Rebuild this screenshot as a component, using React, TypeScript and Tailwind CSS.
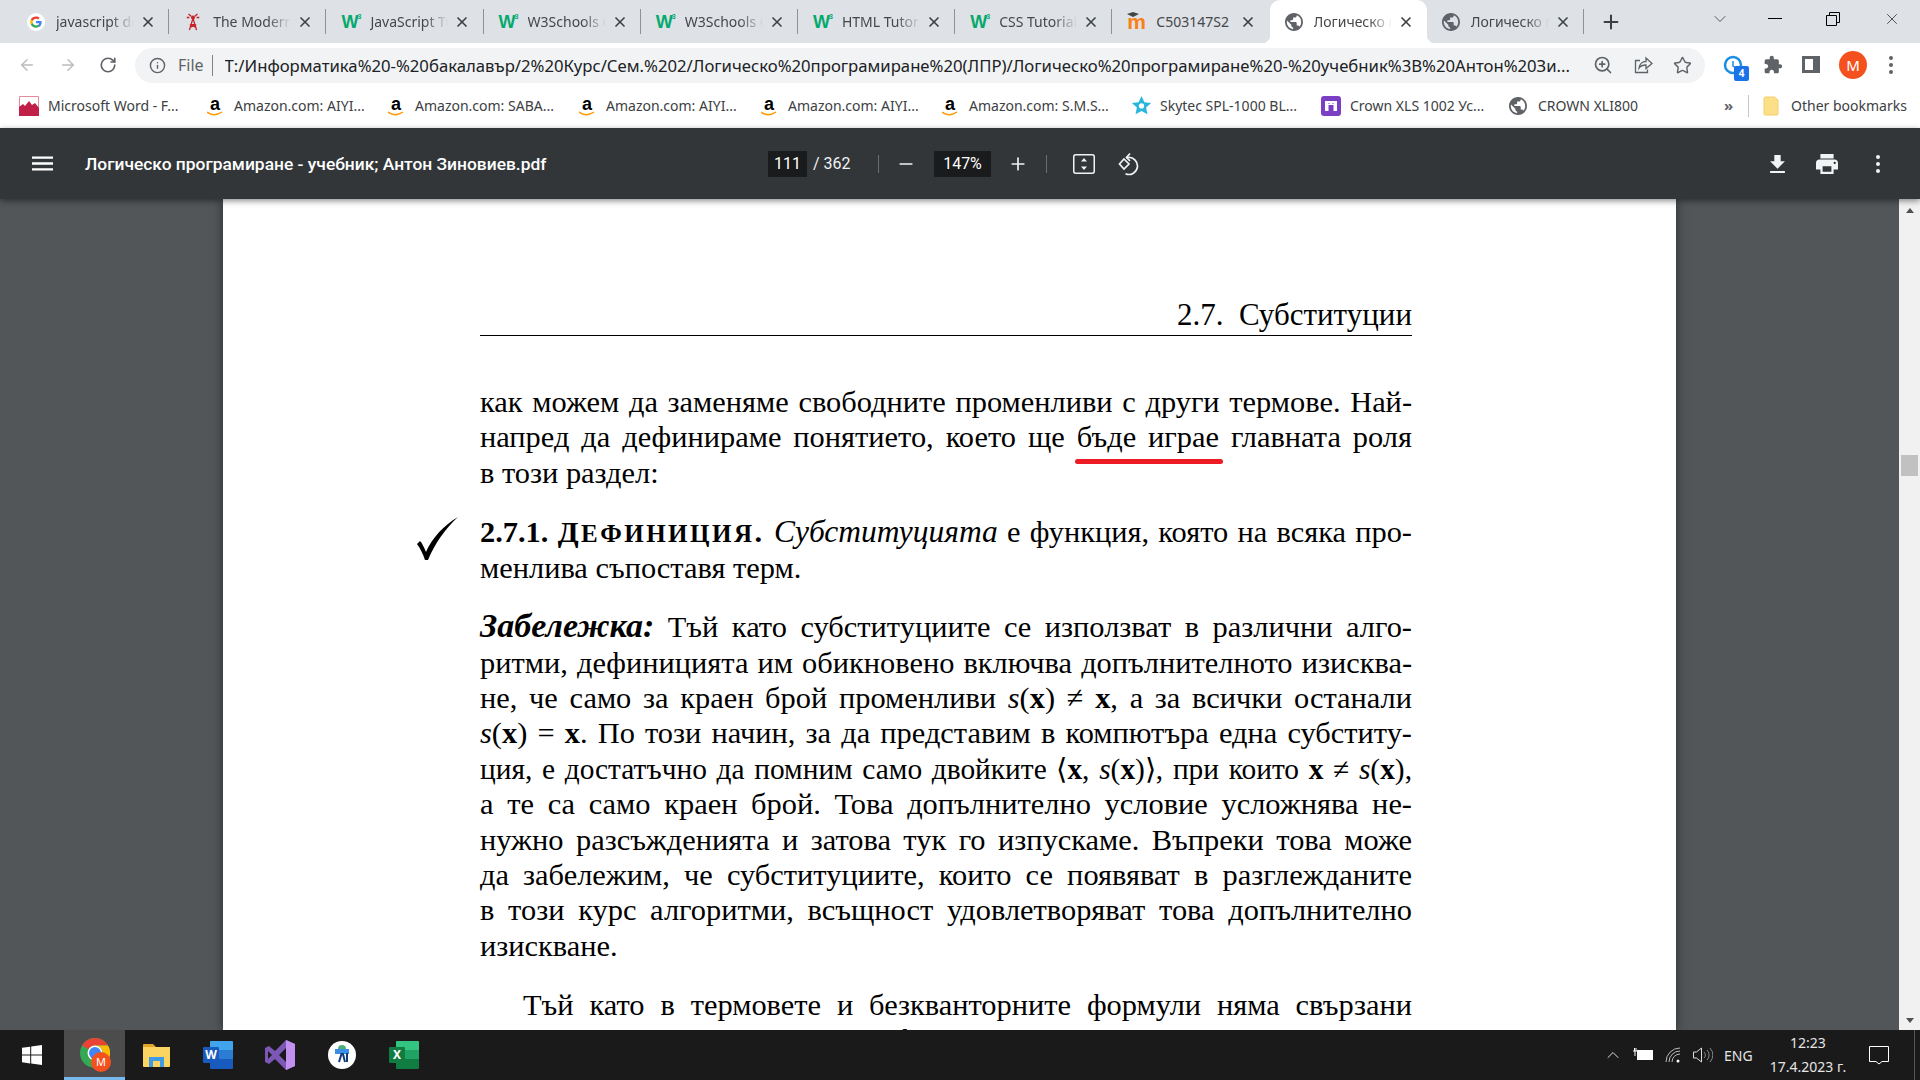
import type { ReactNode } from "react"
import { ArrowLeft, ArrowRight, ChevronDown, ChevronUp, Info, Minus, Plus, RotateCw, Star, X, ZoomIn } from "lucide-react"

const GLOBE =
	"M12 2C6.48 2 2 6.48 2 12s4.48 10 10 10 10-4.48 10-10S17.52 2 12 2zm-1 17.93c-3.95-.49-7-3.85-7-7.93 0-.62.08-1.21.21-1.79L9 15v1c0 1.1.9 2 2 2v1.93zm6.9-2.54c-.26-.81-1-1.39-1.9-1.39h-1v-3c0-.55-.45-1-1-1H8v-2h2c.55 0 1-.45 1-1V7h2c1.1 0 2-.9 2-2v-.41c2.93 1.19 5 4.06 5 7.41 0 2.08-.8 3.97-2.1 5.39z"

function Globe({ className }: { className: string }) {
	return (
		<svg viewBox="2 2 20 20" className={className}>
			<path d={GLOBE} fill="#5f6368" />
		</svg>
	)
}

function GoogleIcon() {
	return (
		<svg viewBox="0 0 48 48" className="w-[18px] h-[18px]">
			<circle cx="24" cy="24" r="24" fill="#fff" />
			<path fill="#EA4335" d="M24 9c4 0 7.300 1.400 9.800 3.800l-4.400 4.400C28 15.800 26.100 15 24 15c-4 0-7.500 2.700-8.700 6.400l-5.200-4C12.600 12.400 17.900 9 24 9z" />
			<path fill="#4285F4" d="M39 24.500c0-1.100-.1-2.100-.3-3H24v6h8.400c-.4 1.900-1.500 3.700-3.200 4.900l5.100 4C37.300 33.600 39 29.400 39 24.500z" />
			<path fill="#FBBC05" d="M15.300 26.600c-.6-1.700-.6-3.500 0-5.200l-5.200-4c-2.200 4.400-2.200 8.800 0 13.200z" />
			<path fill="#34A853" d="M24 39c4 0 7.500-1.300 10.300-3.600l-5.100-4c-1.400 1-3.200 1.600-5.200 1.600-4 0-7.500-2.700-8.700-6.400l-5.200 4C12.600 35.600 17.900 39 24 39z" />
		</svg>
	)
}

function W3Icon() {
	return (
		<span className="w-[20px] h-[18px] flex items-start font-['Liberation_Sans',sans-serif] font-bold text-[#04aa6d] text-[18px] leading-[18px] tracking-[-1px]">
			W<span className="text-[7px] leading-[8px] text-[#04aa6d]">3</span>
		</span>
	)
}

function TowerIcon() {
	return (
		<svg viewBox="0 0 20 20" className="w-[18px] h-[18px]" fill="none" stroke="#c8232c" strokeWidth="1.500">
			<path d="M10 6 6 19M10 6l4 13M7.500 13h5M6.500 16l7-3M13.500 16l-7-3" />
			<circle cx="10" cy="5" r="1.500" fill="#c8232c" />
			<path d="M5 1l3 2.500M15 1l-3 2.500M3 5h3M17 5h-3" />
		</svg>
	)
}

function MoodleIcon() {
	return (
		<span className="relative w-[20px] h-[18px] flex items-end font-['Liberation_Sans',sans-serif] font-bold text-[#f98012] text-[21px] leading-[18px]">
			m
			<svg viewBox="0 0 12 6" className="absolute -top-[1px] left-0 w-[12px] h-[6px]">
				<path d="M0 2 6 0l6 2-6 3z" fill="#444" />
			</svg>
		</span>
	)
}

const TABS: { label: string; icon: ReactNode; active?: boolean; noFade?: boolean }[] = [
	{ label: "javascript documentation", icon: <GoogleIcon /> },
	{ label: "The Modern JavaScript Tutorial", icon: <TowerIcon /> },
	{ label: "JavaScript Tutorial", icon: <W3Icon /> },
	{ label: "W3Schools Online Web", icon: <W3Icon /> },
	{ label: "W3Schools Online Web", icon: <W3Icon /> },
	{ label: "HTML Tutorial", icon: <W3Icon /> },
	{ label: "CSS Tutorial", icon: <W3Icon /> },
	{ label: "C503147S2", icon: <MoodleIcon />, noFade: true },
	{ label: "Логическо програмиране", icon: <Globe className="w-[18px] h-[18px]" />, active: true },
	{ label: "Логическо програмиране", icon: <Globe className="w-[18px] h-[18px]" /> },
]

function Tab({ label, icon, active, noFade, hideSep }: { label: string; icon: ReactNode; active?: boolean; noFade?: boolean; hideSep?: boolean }) {
	return (
		<div
			className={
				active
					? "relative w-[157.2px] h-[43px] flex items-center pl-[15px] bg-white rounded-t-[10px] before:absolute before:bottom-0 before:-left-2 before:w-2 before:h-2 before:bg-[radial-gradient(circle_at_0_0,transparent_8px,white_8.500px)] after:absolute after:bottom-0 after:-right-2 after:w-2 after:h-2 after:bg-[radial-gradient(circle_at_100%_0,transparent_8px,white_8.500px)]"
					: "relative w-[157.2px] h-[43px] flex items-center pl-[15px]"
			}
		>
			<div className="w-[29px] shrink-0 flex items-center">{icon}</div>
			<div
				className={
					noFade
						? "w-[78px] overflow-hidden whitespace-nowrap text-[14px] text-[#45474a]"
						: "w-[78px] overflow-hidden whitespace-nowrap text-[14px] text-[#45474a] [mask-image:linear-gradient(to_right,black_70%,transparent_100%)]"
				}
			>
				{label}
			</div>
			<X className="ml-[6px] w-[16px] h-[16px] text-[#3c4043]" strokeWidth={2.5} />
			{!active && !hideSep && <div className="absolute right-0 top-[9px] w-px h-[25px] bg-[#8e9196]" />}
		</div>
	)
}

function TabStrip() {
	return (
		<div className="h-[43px] bg-[#dee1e6] flex pl-[12px] shrink-0">
			{TABS.map((t, i) => (
				<Tab key={i} {...t} hideSep={i === 7} />
			))}
			<Plus className="ml-[16px] mt-[11px] w-[22px] h-[22px] text-[#3c4043]" strokeWidth={2.2} />
			<ChevronDown className="ml-[88px] mt-[9px] w-[20px] h-[20px] text-[#3c4043]" strokeWidth={1} />
			<div className="ml-[38px] mt-[18px] w-[14px] h-px bg-black" />
			<svg viewBox="0 0 14 14" className="ml-[44px] mt-[12px] w-[14px] h-[14px]" fill="none" stroke="#000" strokeWidth="1">
				<path d="M0.500 3.500h10v10h-10zM3.500 3.500v-3h10v10h-3" />
			</svg>
			<X className="ml-[43px] mt-[10px] w-[18px] h-[18px] text-[#222]" strokeWidth={1} />
		</div>
	)
}

function ShareIcon() {
	return (
		<svg viewBox="0 0 20 20" className="w-[20px] h-[20px]" fill="none" stroke="#5f6368" strokeWidth="1.300">
			<path d="M7 5.500H2.500v12h12v-3" />
			<path d="M6 13c.5-4 3.500-6.500 7-6.500V3l6 5.500-6 5V10c-3 0-5.500 1-7 3z" />
		</svg>
	)
}

function Toolbar() {
	return (
		<div className="h-[43px] bg-white flex items-center shrink-0 font-['Noto_Sans',sans-serif]">
			<ArrowLeft className="ml-[18px] w-[18px] h-[18px] text-[#babcbe]" />
			<ArrowRight className="ml-[23px] w-[18px] h-[18px] text-[#babcbe]" />
			<RotateCw className="ml-[22px] w-[18px] h-[18px] text-[#5f6368]" strokeWidth={2.2} />
			<div className="ml-[18px] w-[1570px] h-[35px] mt-[1px] rounded-full bg-[#f1f3f4] flex items-center pl-[14px] text-[#202124]">
				<Info className="w-[17px] h-[17px] text-[#5f6368]" strokeWidth={2} />
				<span className="ml-[12px] text-[16px] text-[#5f6368]">File</span>
				<div className="ml-[8px] w-px h-[21px] bg-[#7f8185]" />
				<div className="ml-[12px] w-[1350px] pt-[1px] text-[16.700px] whitespace-nowrap overflow-hidden">
					T:/Информатика%20-%20бакалавър/2%20Курс/Сем.%202/Логическо%20програмиране%20(ЛПР)/Логическо%20програмиране%20-%20учебник%3B%20Антон%20Зи...
				</div>
				<ZoomIn className="ml-[18px] w-[20px] h-[20px] text-[#5f6368]" />
				<div className="ml-[20px]"><ShareIcon /></div>
				<Star className="ml-[20px] w-[19px] h-[19px] text-[#5f6368]" strokeWidth={1.8} />
			</div>
			<div className="relative ml-[18px] w-[20px] h-[20px]">
				<svg viewBox="0 0 20 20" className="w-[20px] h-[20px]" fill="none" stroke="#1a8fe3" strokeWidth="2.500">
					<circle cx="10" cy="10" r="8" />
					<path d="M10 6v5l3 2" strokeWidth="1.500" />
				</svg>
				<div className="absolute left-[11px] top-[11px] w-[15px] h-[15px] rounded-[2px] bg-[#1a73e8] text-white text-[10px] font-bold leading-[15px] text-center">4</div>
			</div>
			<svg viewBox="0 0 24 24" className="ml-[20px] w-[20px] h-[20px]">
				<path fill="#5f6368" d="M20.500 11H19V7c0-1.100-.9-2-2-2h-4V3.500C13 2.120 11.880 1 10.500 1S8 2.120 8 3.500V5H4c-1.100 0-1.990.9-1.990 2v3.800H3.500c1.490 0 2.700 1.210 2.700 2.700s-1.210 2.700-2.700 2.700H2V20c0 1.100.9 2 2 2h3.800v-1.500c0-1.490 1.210-2.700 2.700-2.700 1.490 0 2.700 1.210 2.700 2.700V22H17c1.100 0 2-.9 2-2v-4h1.500c1.380 0 2.500-1.120 2.500-2.500S21.880 11 20.500 11z" />
			</svg>
			<div className="ml-[19px] w-[18px] h-[17px] border-[3px] border-[#5f6368] border-r-[7px] bg-white" />
			<div className="ml-[19px] w-[28px] h-[28px] rounded-full bg-[#f4511e] text-white text-[15px] leading-[28px] text-center">M</div>
			<div className="ml-[22px] flex flex-col gap-[3px]">
				<div className="w-[4px] h-[4px] rounded-full bg-[#5f6368]" />
				<div className="w-[4px] h-[4px] rounded-full bg-[#5f6368]" />
				<div className="w-[4px] h-[4px] rounded-full bg-[#5f6368]" />
			</div>
		</div>
	)
}

function AmazonIcon() {
	return (
		<span className="relative w-[20px] h-[20px] block font-['Liberation_Sans',sans-serif] font-bold text-black text-[18px] leading-[16px] text-center">
			a
			<svg viewBox="0 0 16 5" className="absolute left-[2px] bottom-0 w-[16px] h-[5px]" fill="none" stroke="#f90" strokeWidth="1.500">
				<path d="M0 1c4 3.500 10 3.500 15 0" />
			</svg>
		</span>
	)
}

const BOOKMARKS: { label: string; width: string; icon: ReactNode }[] = [
	{
		label: "Microsoft Word - F...",
		width: "w-[186px]",
		icon: (
			<svg viewBox="0 0 20 20" className="w-[20px] h-[20px]">
				<path d="M.5.5h19v19H.5z" fill="#fff" stroke="#e48a9b" />
				<path d="M0 20V11l4-3 2 2 4-5 3 4 3-2 4 5v8z" fill="#c01f48" />
			</svg>
		),
	},
	{ label: "Amazon.com: AIYI...", width: "w-[181px]", icon: <AmazonIcon /> },
	{ label: "Amazon.com: SABA...", width: "w-[191px]", icon: <AmazonIcon /> },
	{ label: "Amazon.com: AIYI...", width: "w-[182px]", icon: <AmazonIcon /> },
	{ label: "Amazon.com: AIYI...", width: "w-[181px]", icon: <AmazonIcon /> },
	{ label: "Amazon.com: S.M.S...", width: "w-[191px]", icon: <AmazonIcon /> },
	{
		label: "Skytec SPL-1000 BL...",
		width: "w-[190px]",
		icon: (
			<svg viewBox="0 0 24 24" className="w-[21px] h-[21px]">
				<path d="M12 1l3.300 7.200 7.700.9-5.700 5.300 1.500 7.700L12 18.200 5.200 22l1.500-7.700L1 9.100l7.700-.9z" fill="#2ab6dc" />
				<circle cx="12" cy="12.500" r="3" fill="#fff" />
			</svg>
		),
	},
	{
		label: "Crown XLS 1002 Ус...",
		width: "w-[188px]",
		icon: (
			<svg viewBox="0 0 20 20" className="w-[20px] h-[20px]">
				<rect width="20" height="20" rx="3" fill="#7b3fc4" />
				<path d="M4 5h12v10h-3.500V9h-5v6H4z" fill="#fff" />
				<path d="M7.500 7h1v1h-1zM11.500 7h1v1h-1z" fill="#7b3fc4" />
			</svg>
		),
	},
	{ label: "CROWN XLI800", width: "w-[215px]", icon: <Globe className="w-[18px] h-[18px]" /> },
]

function BookmarksBar() {
	return (
		<div className="h-[42px] bg-white flex items-center pl-[19px] pb-[3px] shrink-0 text-[14px] text-[#3c4043] font-['Noto_Sans',sans-serif]">
			{BOOKMARKS.map((b, i) => (
				<div key={i} className={`${b.width} shrink-0 flex items-center whitespace-nowrap`}>
					<div className="w-[29px] shrink-0">{b.icon}</div>
					{b.label}
				</div>
			))}
			<span className="w-[24px] text-[15px] font-bold text-[#5f6368]">»</span>
			<div className="w-px h-[22px] bg-[#c4c7c5]" />
			<svg viewBox="0 0 16 20" className="ml-[14px] w-[16px] h-[20px]">
				<path d="M1 2.500A1.500 1.500 0 0 1 2.500 1h9L15 4v14a1 1 0 0 1-1 1H2a1 1 0 0 1-1-1z" fill="#fbe089" stroke="#f4cf6a" />
			</svg>
			<span className="ml-[12px]">Other bookmarks</span>
		</div>
	)
}

function PdfToolbar() {
	return (
		<div className="relative z-10 h-[71px] bg-[#323639] flex items-center shrink-0 text-white font-['Roboto',sans-serif] shadow-[0_2px_6px_rgba(0,0,0,0.45)]">
			<svg viewBox="3 6 18 12" className="ml-[32px] w-[21px] h-[15px]">
				<path fill="#fff" d="M3 18h18v-2H3v2zm0-5h18v-2H3v2zm0-7v2h18V6H3z" />
			</svg>
			<div className="ml-[32px] mt-[1px] w-[683px] text-[17.400px] font-medium whitespace-nowrap">Логическо програмиране - учебник; Антон Зиновиев.pdf</div>
			<div className="w-[39px] h-[26px] bg-[#191b1c] text-[16px] leading-[26px] text-center">111</div>
			<span className="ml-[6px] w-[65px] text-[16px] text-[#f1f3f4]">/ 362</span>
			<div className="w-px h-[18px] bg-[#6b6e70]" />
			<Minus className="ml-[17px] w-[20px] h-[20px] text-[#f1f3f4]" />
			<div className="ml-[18px] w-[57px] h-[26px] bg-[#191b1c] text-[16px] leading-[26px] text-center">147%</div>
			<Plus className="ml-[17px] w-[20px] h-[20px] text-[#f1f3f4]" />
			<div className="ml-[18px] w-px h-[18px] bg-[#6b6e70]" />
			<svg viewBox="0 0 22 20" className="ml-[26px] w-[22px] h-[20px]" fill="none" stroke="#f1f3f4" strokeWidth="1.500">
				<rect x=".75" y=".75" width="20.500" height="18.500" rx="2" />
				<path d="M11 4l3 3.500H8zM11 16l3-3.500H8z" fill="#f1f3f4" stroke="none" />
			</svg>
			<svg viewBox="0 0 24 24" className="ml-[22px] w-[24px] h-[24px]" fill="none" stroke="#f1f3f4" strokeWidth="1.700">
				<path d="M5 8.500 10 13.500 5 18.500 0.500 13.500z" transform="translate(2 -1.500)" />
				<path d="M9 5.500h2a8.500 8.500 0 1 1-2.500 16.200" />
				<path d="M13 1.500 9.500 5.500 13 9" />
			</svg>
			<svg viewBox="5 3 14 17" className="ml-[629px] w-[15px] h-[18px]">
				<path fill="#f1f3f4" d="M19 9h-4V3H9v6H5l7 7 7-7zM5 18v2h14v-2H5z" />
			</svg>
			<svg viewBox="2 3 20 18" className="ml-[31px] w-[22px] h-[20px]">
				<path fill="#f1f3f4" d="M19 8H5c-1.660 0-3 1.340-3 3v6h4v4h12v-4h4v-6c0-1.660-1.340-3-3-3zm-3 11H8v-5h8v5zm3-7c-.55 0-1-.45-1-1s.45-1 1-1 1 .45 1 1-.45 1-1 1zm-1-9H6v4h12V3z" />
			</svg>
			<div className="ml-[38px] flex flex-col gap-[3px]">
				<div className="w-[4px] h-[4px] rounded-full bg-[#f1f3f4]" />
				<div className="w-[4px] h-[4px] rounded-full bg-[#f1f3f4]" />
				<div className="w-[4px] h-[4px] rounded-full bg-[#f1f3f4]" />
			</div>
		</div>
	)
}

function L({ children, last }: { children: ReactNode; last?: boolean }) {
	return <div className={last ? "" : "[text-align-last:justify]"}>{children}</div>
}

const S = () => <i>s</i>
const Xv = () => <span className="font-bold">x</span>

function PageText() {
	return (
		<div className="w-[932px] ml-[257px] pt-[99px] text-black text-[30.400px] leading-[35.400px] font-['Liberation_Serif',serif]">
			<div className="h-[38px] border-b-[1.500px] border-black text-right text-[31px] leading-[33px] whitespace-pre">2.7.  Субституции</div>
			<div className="mt-[49px] mb-[23.600px]">
				<L>как можем да заменяме свободните променливи с други термове. Най-</L>
				<L>
					напред да дефинираме понятието, което ще{" "}
					<span className="relative">
						бъде играе
						<span className="absolute -left-[2px] -right-[4px] top-[39px] h-[5px] rounded-full bg-[#ed1c24]" />
					</span>{" "}
					главната роля
				</L>
				<L last>в този раздел:</L>
			</div>
			<div className="relative mb-[23.600px]">
				<svg viewBox="0 0 41 43" className="absolute -left-[63px] top-[2px] w-[41px] h-[43px]">
					<path d="M0 27 3 24C5 26 7 30 9 35 15 21 27 8 41 0 29 11 18 26 11 43H8C6 37 3 31 0 27z" fill="#000" />
				</svg>
				<L>
					<b>
						2.7.1. <span className="tracking-[2.500px]">Д<span className="text-[25px]">ЕФИНИЦИЯ</span>.</span>
					</b>{" "}
					<i className="text-[31.500px] leading-[20px]">Субституцията</i> е функция, която на всяка про-
				</L>
				<L last>менлива съпоставя терм.</L>
			</div>
			<div className="mb-[23.600px]">
				<L>
					<b><i className="text-[34px] leading-[20px]">Забележка:</i></b> Тъй като субституциите се използват в различни алго-
				</L>
				<L>ритми, дефиницията им обикновено включва допълнителното изисква-</L>
				<L>
					не, че само за краен брой променливи <S />(<Xv />) ≠ <Xv />, а за всички останали
				</L>
				<L>
					<S />(<Xv />) = <Xv />. По този начин, за да представим в компютъра една субститу-
				</L>
				<div className="[text-align-last:justify] text-[29.400px]">
					ция, е достатъчно да помним само двойките ⟨<Xv />, <S />(<Xv />)⟩, при които <Xv /> ≠ <S />(<Xv />),
				</div>
				<L>а те са само краен брой. Това допълнително условие усложнява не-</L>
				<L>нужно разсъжденията и затова тук го изпускаме. Въпреки това може</L>
				<L>да забележим, че субституциите, които се появяват в разглежданите</L>
				<L>в този курс алгоритми, всъщност удовлетворяват това допълнително</L>
				<L last>изискване.</L>
			</div>
			<div className="indent-[43px]">
				<L>Тъй като в термовете и безкванторните формули няма свързани</L>
			</div>
			<L>променливи, то в тези формули замяната е лесна при</L>
		</div>
	)
}

function Scrollbar() {
	return (
		<div className="w-[21px] bg-[#f1f1f1] flex flex-col items-center justify-between pt-[9px] pb-[7px] shrink-0">
			<div className="w-0 h-0 border-x-[4.500px] border-x-transparent border-b-[5px] border-b-[#505050]" />
			<div className="relative w-full">
				<div className="absolute left-[2px] -top-[563px] w-[17px] h-[21px] bg-[#c1c1c1]" />
				<div className="w-0 h-0 mx-auto border-x-[4.500px] border-x-transparent border-t-[5px] border-t-[#505050]" />
			</div>
		</div>
	)
}

function Viewer() {
	return (
		<div className="flex-1 min-h-0 flex bg-[#525659] overflow-hidden">
			<div className="flex-1 pl-[223px] pr-[223px]">
				<div className="w-[1453px] h-full bg-white shadow-[0_0_10px_rgba(0,0,0,0.5)] overflow-hidden">
					<PageText />
				</div>
			</div>
			<Scrollbar />
		</div>
	)
}

function Taskbar() {
	return (
		<div className="relative z-20 h-[50px] bg-[#1a1a1a] flex items-center shrink-0 text-white font-['Noto_Sans',sans-serif] [&>*]:shrink-0">
			<div className="w-[64px] flex justify-center">
				<svg viewBox="0 0 20 20" className="w-[20px] h-[20px]" fill="#fff">
					<path d="M0 2.800 8.200 1.700v7.900H0zM9.200 1.500 20 0v9.600H9.200zM0 10.500h8.200v7.900L0 17.300zM9.200 10.500H20V20l-10.800-1.500z" />
				</svg>
			</div>
			<div className="relative w-[61px] h-full bg-[#4c4c4c] border-b-[3px] border-[#76b9ed] flex items-center justify-center">
				<svg viewBox="0 0 30 30" className="w-[30px] h-[30px] -mt-[2px]">
					<circle cx="15" cy="15" r="15" fill="#34a853" />
					<path d="M15 0a15 15 0 0 1 13 7.500H15a7.500 7.500 0 0 0-6.500 3.750L2 7.500A15 15 0 0 1 15 0z" fill="#ea4335" />
					<path d="M28 7.500a15 15 0 0 1-13 22.500l6.500-11.250A7.500 7.500 0 0 0 15 7.500z" fill="#fbbc05" />
					<circle cx="15" cy="15" r="7.500" fill="#fff" />
					<circle cx="15" cy="15" r="6" fill="#4285f4" />
				</svg>
				<div className="absolute left-[27px] top-[22px] w-[20px] h-[20px] rounded-full bg-[#f4511e] text-[11px] leading-[20px] text-center">M</div>
			</div>
			<div className="w-[62px] flex justify-center">
				<svg viewBox="0 0 27 24" className="w-[27px] h-[24px]">
					<path d="M0 2a1 1 0 0 1 1-1h9l3 3h-13z" fill="#e2a52a" />
					<path d="M0 4h27v19a1 1 0 0 1-1 1H1a1 1 0 0 1-1-1z" fill="#fcd462" />
					<path d="M6 14h15v10h-4v-6h-7v6H6z" fill="#3f9be3" />
				</svg>
			</div>
			<div className="w-[62px] flex justify-center">
				<div className="relative w-[30px] h-[28px]">
					<div className="absolute right-0 top-0 w-[23px] h-[28px] rounded-[1px] bg-[linear-gradient(#41a5ee_33%,#2b7cd3_33%,#2b7cd3_66%,#185abd_66%)]" />
					<div className="absolute left-0 top-[6px] w-[16px] h-[16px] rounded-[1px] bg-[#185abd] text-[12px] font-bold leading-[16px] text-center">W</div>
				</div>
			</div>
			<div className="w-[62px] flex justify-center">
				<svg viewBox="0 0 30 30" className="w-[30px] h-[30px]">
					<path d="M21 0l9 4v22l-9 4-11-11-6 5-4-2V8l4-2 6 5z" fill="#7c57b5" />
					<path d="M21 0l9 4v22l-9 4z" fill="#c291f0" />
					<path d="M21 8l-7 7 7 7zM3 11v8l4-4z" fill="#1a1a1a" />
				</svg>
			</div>
			<div className="w-[62px] flex justify-center">
				<svg viewBox="0 0 28 28" className="w-[28px] h-[28px]">
					<circle cx="14" cy="14" r="14" fill="#fff" />
					<path d="M7 8h14v5H7z" fill="#3a8ee6" />
					<path d="M11 21l2.500-8h1.500l2 8M19 12v9" fill="none" stroke="#123b7a" strokeWidth="2" />
					<path d="M10 8a4 4 0 0 1 8 0z" fill="#4caf7a" />
				</svg>
			</div>
			<div className="w-[62px] flex justify-center">
				<div className="relative w-[30px] h-[28px]">
					<div className="absolute right-0 top-0 w-[23px] h-[28px] rounded-[1px] bg-[linear-gradient(#33c481_33%,#21a366_33%,#21a366_66%,#107c41_66%)]" />
					<div className="absolute left-0 top-[6px] w-[16px] h-[16px] rounded-[1px] bg-[#107c41] text-[12px] font-bold leading-[16px] text-center">X</div>
				</div>
			</div>
			<ChevronUp className="ml-[1168px] w-[20px] h-[20px] text-[#ddd]" strokeWidth={1.2} />
			<svg viewBox="0 0 20 14" className="ml-[10px] w-[20px] h-[14px]" fill="none" stroke="#fff" strokeWidth="1">
				<rect x="4.500" y="2.500" width="15" height="9" fill="#fff" />
				<path d="M0 3h4M1.500 0v3M3 0v3M2 3v5" />
			</svg>
			<svg viewBox="0 0 16 16" className="ml-[12px] w-[16px] h-[16px]" fill="none" stroke="#bbb" strokeWidth="1">
				<path d="M1 15A14 14 0 0 1 15 1M4 15A11 11 0 0 1 15 4M7 15a8 8 0 0 1 8-8" />
				<circle cx="13" cy="14" r="1.500" fill="#fff" stroke="none" />
			</svg>
			<svg viewBox="0 0 20 16" className="ml-[12px] w-[20px] h-[16px]" fill="none" stroke="#ddd" strokeWidth="1">
				<path d="M.5 5h3l5-4v14l-5-4h-3z" />
				<path d="M11 5a4 4 0 0 1 0 6M14 3a7 7 0 0 1 0 10M17 1a10 10 0 0 1 0 14" stroke="#888" />
			</svg>
			<span className="ml-[11px] w-[32px] text-[14px] text-[#e5e5e5]">ENG</span>
			<div className="ml-[12px] w-[80px] text-center text-[14px] leading-[24px] text-[#e5e5e5] whitespace-nowrap">
				<div>12:23</div>
				<div>17.4.2023 г.</div>
			</div>
			<svg viewBox="0 0 20 20" className="ml-[21px] w-[20px] h-[20px]" fill="none" stroke="#fff" strokeWidth="1">
				<path d="M.5 1.500h19v15H13l-3 2.500-3-2.500H.5z" />
			</svg>
			<div className="ml-[25px] w-px h-full bg-[#555]" />
		</div>
	)
}

export default function App() {
	return (
		<div className="w-[1920px] h-[1080px] flex flex-col overflow-hidden bg-white font-['Noto_Sans',sans-serif]">
			<TabStrip />
			<Toolbar />
			<BookmarksBar />
			<PdfToolbar />
			<Viewer />
			<Taskbar />
		</div>
	)
}
